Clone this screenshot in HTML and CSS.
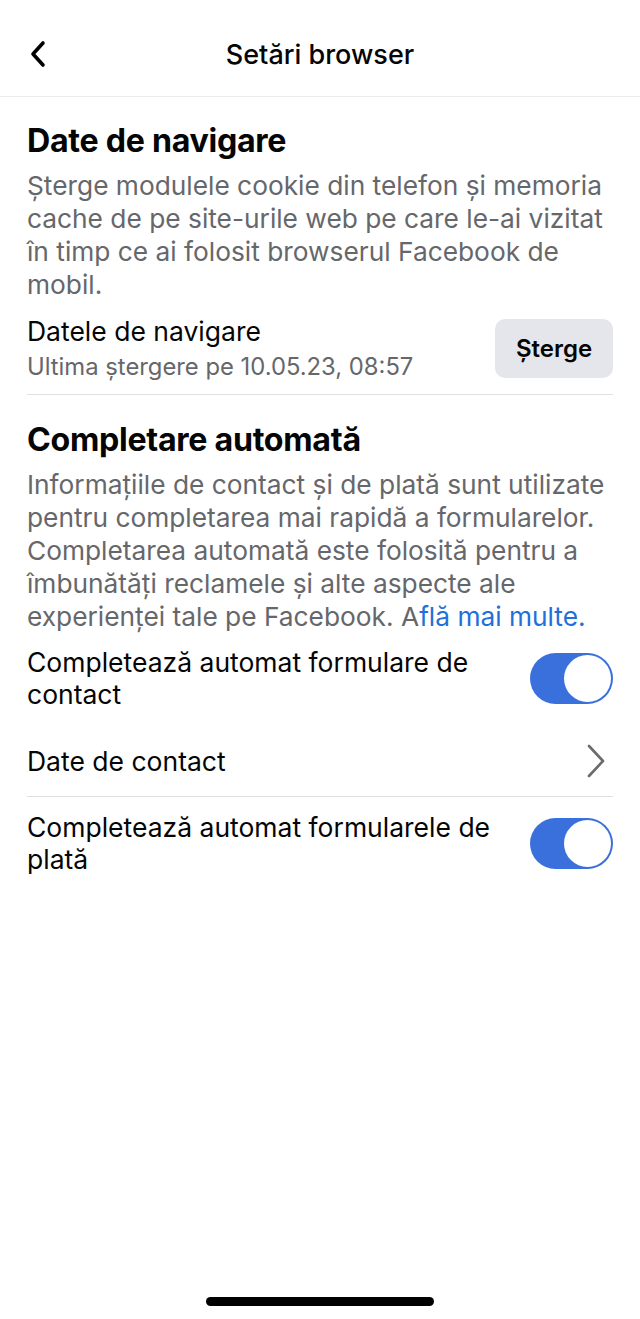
FILE: index.html
```html
<!DOCTYPE html>
<html lang="ro">
<head>
    <meta charset="UTF-8">
    <meta name="viewport" content="width=device-width, initial-scale=1.0">
    <title>Setări browser</title>
    <link rel="stylesheet" href="styles.css">
</head>
<body>
    <!-- Top bar with back button and title -->
    <header class="top-bar">
        <button class="back-button" aria-label="Înapoi">
            <svg width="20" height="28" viewBox="0 0 20 28">
                <path d="M15 3 L5 14 L15 25" fill="none" stroke="#000" stroke-width="3.6" stroke-linecap="round" stroke-linejoin="round"/>
            </svg>
        </button>
        <h1 class="top-title">Setări browser</h1>
    </header>

    <main class="content">
        <!-- Browsing data section -->
        <section class="section">
            <h2 class="section-title">Date de navigare</h2>
            <p class="section-text">Șterge modulele cookie din telefon și memoria cache de pe site-urile web pe care le-ai vizitat în timp ce ai folosit browserul Facebook de mobil.</p>

            <div class="row row-clear">
                <div class="row-label">
                    <div class="row-title">Datele de navigare</div>
                    <div class="row-sub">Ultima ștergere pe 10.05.23, 08:57</div>
                </div>
                <button class="clear-button">Șterge</button>
            </div>
        </section>

        <!-- Autofill section -->
        <section class="section section-autofill">
            <h2 class="section-title">Completare automată</h2>
            <p class="section-text">Informațiile de contact și de plată sunt utilizate pentru completarea mai rapidă a formularelor. Completarea automată este folosită pentru a îmbunătăți reclamele și alte aspecte ale experienței tale pe Facebook. A<a href="#" class="link">flă mai multe.</a></p>

            <div class="row row-toggle">
                <div class="row-title">Completează automat formulare de contact</div>
                <span class="toggle on"><span class="knob"></span></span>
            </div>

            <div class="row row-link">
                <div class="row-title">Date de contact</div>
                <svg class="chevron" width="20" height="34" viewBox="0 0 20 34">
                    <path d="M3 2 L17 17 L3 32" fill="none" stroke="#6b6b6b" stroke-width="2.6" stroke-linecap="round" stroke-linejoin="round"/>
                </svg>
            </div>

            <div class="row row-toggle row-last">
                <div class="row-title">Completează automat formularele de plată</div>
                <span class="toggle on"><span class="knob"></span></span>
            </div>
        </section>
    </main>

    <!-- Home indicator -->
    <div class="home-bar"></div>
</body>
</html>
```

FILE: styles.css
```css
/* General Page Styling */
body {
    font-family: Inter, "Noto Sans", sans-serif;
    margin: 0;
    padding: 0;
    background-color: #fff;
    color: #050505;
    min-height: 1319px;
    display: flex;
    flex-direction: column;
}

/* Top bar */
.top-bar {
    height: 96px;
    border-bottom: 1px solid #ececec;
    display: flex;
    align-items: center;
    justify-content: center;
    position: relative;
}

.back-button {
    position: absolute;
    left: 28px;
    top: 40px;
    padding: 0;
    border: none;
    background: none;
    line-height: 0;
}

.top-title {
    margin: 0;
    margin-top: 12px;
    font-size: 27px;
    font-weight: 500;
}

/* Main content */
.content {
    padding: 0 27px;
    flex: 1;
}

.section-title {
    margin: 25px 0 0 0;
    font-size: 32.2px;
    line-height: 38px;
    font-weight: 700;
    letter-spacing: -0.3px;
}

.section-autofill .section-title {
    margin-top: 26px;
}

.section-text {
    margin: 9px 0 0 0;
    font-size: 26.3px;
    line-height: 33px;
    color: #65676b;
}

.link {
    color: #216fdb;
    text-decoration: none;
}

/* Rows */
.row {
    display: flex;
    align-items: center;
    justify-content: space-between;
}

.row-title {
    font-size: 26.5px;
    line-height: 32px;
}

.row-label .row-title {
    line-height: 34px;
}

.row-sub {
    font-size: 23.8px;
    line-height: 30px;
    color: #65676b;
    margin-top: 4px;
}

.row-clear {
    padding: 13px 0 12px 0;
    border-bottom: 1px solid #e0e0e0;
}

.clear-button {
    width: 118px;
    height: 59px;
    border: none;
    border-radius: 10px;
    background-color: #e4e6eb;
    font-family: inherit;
    font-size: 24px;
    font-weight: 600;
    color: #050505;
    padding: 0;
}

.row-toggle {
    padding: 13px 0 15px 0;
}

.row-toggle .row-title {
    max-width: 490px;
}

.row-last {
    padding-top: 14px;
}

.row-link {
    padding: 19px 0 18px 0;
    border-bottom: 1px solid #e0e0e0;
}

.chevron {
    margin-right: 7px;
}

/* Toggle switch */
.toggle {
    width: 83px;
    height: 51px;
    border-radius: 26px;
    background-color: #3a70db;
    display: flex;
    align-items: center;
    justify-content: flex-end;
    padding: 0 2px;
    box-sizing: border-box;
    flex-shrink: 0;
}

.knob {
    width: 47px;
    height: 47px;
    border-radius: 50%;
    background-color: #fff;
}

/* Home indicator */
.home-bar {
    width: 228px;
    height: 9px;
    border-radius: 5px;
    background-color: #000;
    margin: 0 auto 13px auto;
}
```
